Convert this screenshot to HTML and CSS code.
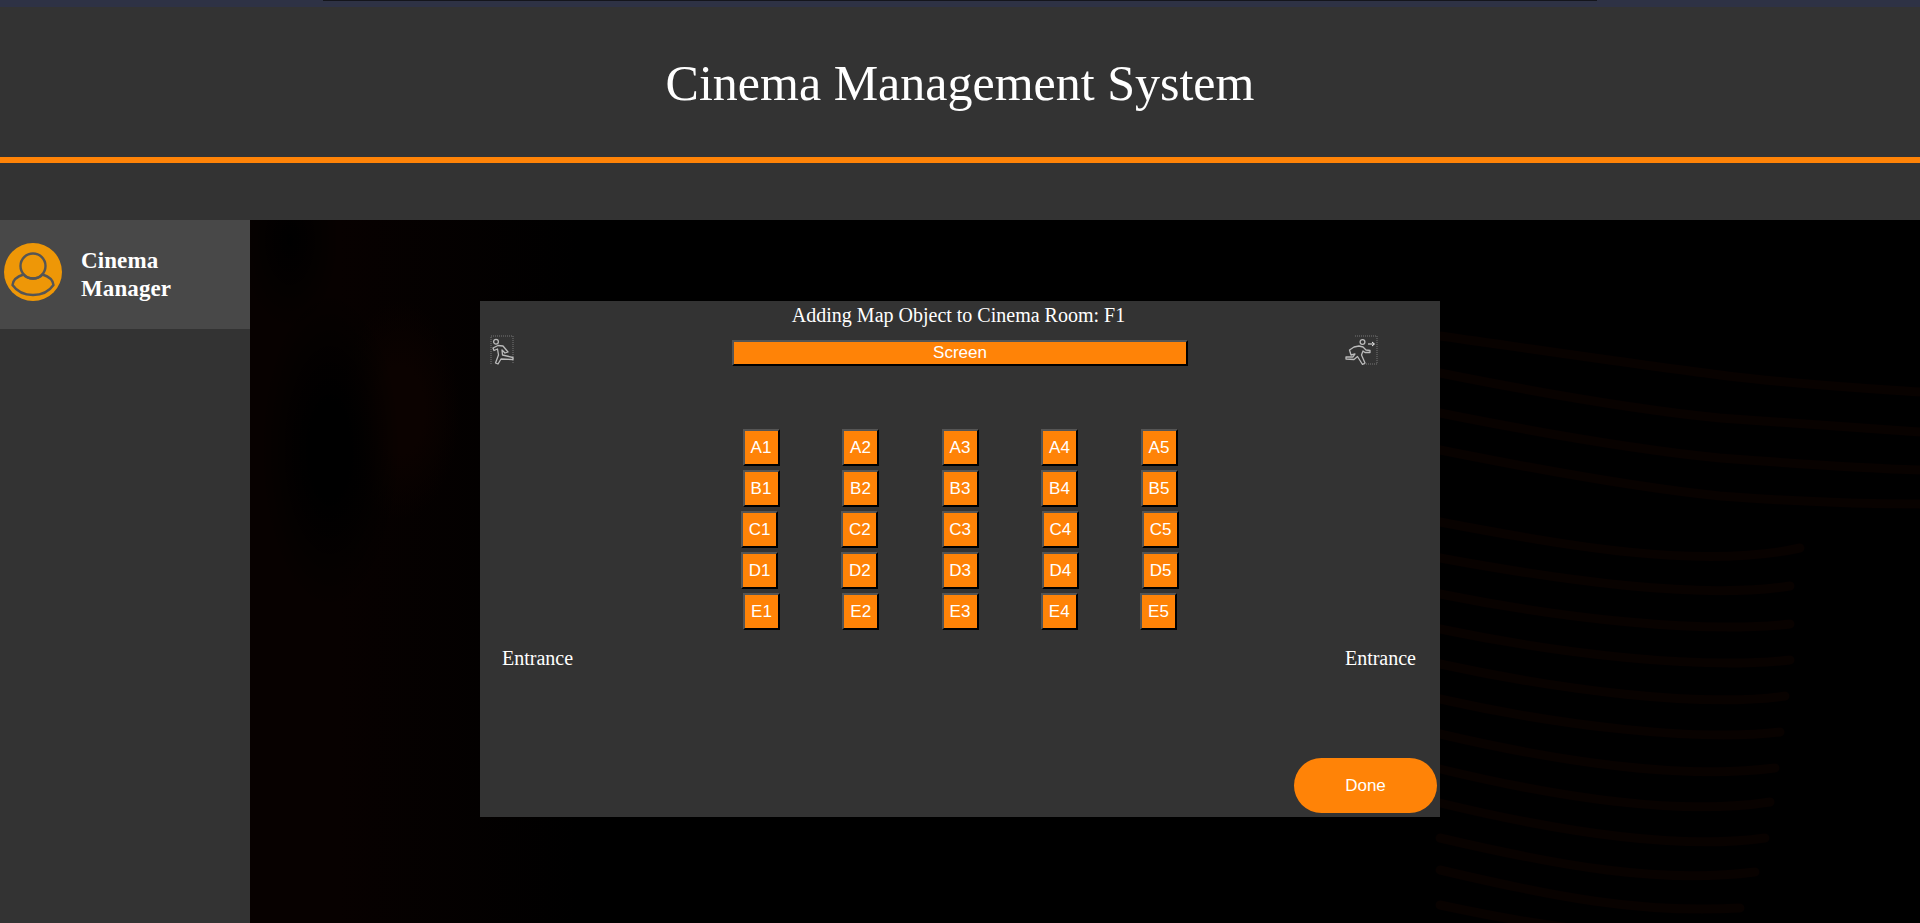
FILE: index.html
```html
<!DOCTYPE html>
<html lang="en">
<head>
    <meta charset="UTF-8">
    <title>Cinema Management System</title>
    <link rel="stylesheet" href="styles.css">
</head>
<body>

<div class="topstrip"><div class="topstrip-line"></div></div>
<header class="header">
    <h1>Cinema Management System</h1>
</header>
<nav class="navbar"></nav>

<div class="content">
    <aside class="sidebar">
        <div class="profile">
            <svg class="avatar" viewBox="0 0 58 58">
                <circle cx="29" cy="29" r="29" fill="#ee9707"/>
                <circle cx="29" cy="23" r="12.5" fill="none" stroke="#555" stroke-width="2.4"/>
                <path d="M19.5 31.5 C13 33.5 9 37 8.5 42 C13 48.5 20.5 52 29 52 C37.5 52 45 48.5 49.5 42 C49 37 45 33.5 38.5 31.5 C36 34.5 32.8 35.5 29 35.5 C25.2 35.5 22 34.5 19.5 31.5 Z" fill="none" stroke="#555" stroke-width="2.4" stroke-linejoin="round"/>
            </svg>
            <div class="profile-name">Cinema<br>Manager</div>
        </div>
    </aside>

    <main class="main">
        <!-- faint backdrop picture -->
        <svg class="backdrop" viewBox="250 220 1670 703" preserveAspectRatio="none">
            <g fill="none" stroke="#080200" stroke-width="9" stroke-linecap="round">
                <path d="M1440 336 C1540 350 1640 365 1720 375 C1800 385 1860 388 1920 392"/>
                <path d="M1440 373 C1540 393 1640 410 1720 418 C1800 424 1860 428 1920 432"/>
                <path d="M1440 413 C1540 433 1640 450 1720 458 C1800 464 1860 468 1920 470"/>
                <path d="M1440 450 C1540 470 1640 488 1720 496 C1800 502 1860 504 1920 504"/>
                <path d="M1440 522 C1560 545 1700 570 1800 548"/>
                <path d="M1440 558 C1560 580 1700 600 1790 586"/>
                <path d="M1440 594 C1560 618 1700 634 1790 624"/>
                <path d="M1440 629 C1560 654 1700 670 1790 660"/>
                <path d="M1440 664 C1560 690 1700 708 1785 696"/>
                <path d="M1440 699 C1560 726 1700 742 1780 732"/>
                <path d="M1440 734 C1560 762 1680 780 1775 768"/>
                <path d="M1440 769 C1560 798 1680 816 1770 802"/>
                <path d="M1440 803 C1560 832 1680 850 1765 838"/>
                <path d="M1440 838 C1560 866 1660 884 1755 872"/>
                <path d="M1440 870 C1550 896 1640 914 1740 908"/>
                <path d="M1440 905 C1500 918 1540 925 1590 930"/>
            </g>
        </svg>

        <div class="map-panel">
            <div class="map-title">Adding Map Object to Cinema Room: F1</div>

            <div class="map-top">
                <svg class="exit-left" viewBox="0 0 24 30">
                    <path d="M1 29 V1 H23 V29" fill="none" stroke="#777" stroke-width="1" stroke-dasharray="1 1"/>
                    <circle cx="6" cy="6.7" r="2.4" fill="none" stroke="#bbb" stroke-width="1.3"/>
                    <path d="M3 13 L8 10.5 L13 11 L18 17 L15 18 L12 15 L12.5 20 L23 22.5 L23 24.5 L11 24 L8 29 L5.5 28 L8.5 20 L7.5 14 L4 15.5 Z" fill="none" stroke="#bbb" stroke-width="1.3" stroke-linejoin="round"/>
                </svg>
                <button class="screen-btn" type="button">Screen</button>
                <svg class="exit-right" viewBox="0 0 33 30">
                    <path d="M10 1 H32 V29 H19" fill="none" stroke="#777" stroke-width="1" stroke-dasharray="1 1"/>
                    <circle cx="17.5" cy="7" r="2.4" fill="none" stroke="#bbb" stroke-width="1.3"/>
                    <path d="M23 9 H29 M27 7 L29.5 9 L27 11" fill="none" stroke="#eee" stroke-width="1"/>
                    <path d="M14 11 L18 12 L21 15 L25 15.5 L25 17.5 L20 17.5 L18 16 L16.5 20 L20 28 L17.5 29.5 L12.5 21.5 L9 24.5 L1 24 L1 22 L8 22 L10 19 L6 20 L4.5 15 L9 12 Z" fill="none" stroke="#bbb" stroke-width="1.3" stroke-linejoin="round"/>
                </svg>
            </div>

            <div class="seats">
                <div class="seat-row gap-mid">
                    <button class="seat" type="button">A1</button>
                    <button class="seat" type="button">A2</button>
                    <button class="seat" type="button">A3</button>
                    <button class="seat" type="button">A4</button>
                    <button class="seat" type="button">A5</button>
                </div>
                <div class="seat-row gap-mid">
                    <button class="seat" type="button">B1</button>
                    <button class="seat" type="button">B2</button>
                    <button class="seat" type="button">B3</button>
                    <button class="seat" type="button">B4</button>
                    <button class="seat" type="button">B5</button>
                </div>
                <div class="seat-row gap-wide">
                    <button class="seat" type="button">C1</button>
                    <button class="seat" type="button">C2</button>
                    <button class="seat" type="button">C3</button>
                    <button class="seat" type="button">C4</button>
                    <button class="seat" type="button">C5</button>
                </div>
                <div class="seat-row gap-wide">
                    <button class="seat" type="button">D1</button>
                    <button class="seat" type="button">D2</button>
                    <button class="seat" type="button">D3</button>
                    <button class="seat" type="button">D4</button>
                    <button class="seat" type="button">D5</button>
                </div>
                <div class="seat-row gap-narrow">
                    <button class="seat" type="button">E1</button>
                    <button class="seat" type="button">E2</button>
                    <button class="seat" type="button">E3</button>
                    <button class="seat" type="button">E4</button>
                    <button class="seat" type="button">E5</button>
                </div>
            </div>

            <div class="entrances">
                <span>Entrance</span>
                <span>Entrance</span>
            </div>

            <button class="done-btn" type="button">Done</button>
        </div>
    </main>
</div>

</body>
</html>
```

FILE: styles.css
```css
html, body {
    height: 100%;
}
body {
    margin: 0;
    display: flex;
    flex-direction: column;
    overflow: hidden;
    background-color: #000;
    color: #fff;
    font-family: "Liberation Serif", serif;
}
.topstrip {
    height: 7px;
    flex: none;
    background-color: #2e3245;
    display: flex;
    justify-content: center;
}
.topstrip-line {
    width: 1274px;
    height: 1px;
    background-color: #14151c;
}
.header {
    height: 150px;
    flex: none;
    box-sizing: content-box;
    background-color: #333;
    border-bottom: 6px solid #ff8307;
    display: flex;
    align-items: center;
    justify-content: center;
}
.header h1 {
    margin: 2px 0 0;
    font-size: 50px;
    font-weight: normal;
}
.navbar {
    height: 57px;
    flex: none;
    background-color: #333;
}
.content {
    flex: 1;
    display: flex;
    min-height: 0;
}
.sidebar {
    width: 250px;
    flex: none;
    background-color: #333;
}
.profile {
    height: 104px;
    background-color: #484848;
    display: flex;
    align-items: center;
    padding: 0 0 5px 4px;
    gap: 19px;
}
.avatar {
    width: 58px;
    height: 58px;
    flex: none;
}
.profile-name {
    margin-top: 5px;
    font-size: 23px;
    font-weight: bold;
    line-height: 28px;
    letter-spacing: 0.1px;
}
.main {
    flex: 1;
    position: relative;
    background-color: #000;
    background-image:
        radial-gradient(ellipse 70px 160px at 80px 230px, #000 30%, transparent 100%),
        radial-gradient(ellipse 50px 90px at 40px 20px, #000 0, transparent 100%),
        radial-gradient(ellipse 60px 110px at 150px 190px, #0b0200 40%, transparent 100%),
        linear-gradient(to right, #070100 0, #070100 90px, transparent 330px);
}
.backdrop {
    position: absolute;
    inset: 0;
    width: 100%;
    height: 100%;
}
.map-panel {
    position: relative;
    width: 960px;
    height: 516px;
    margin: 81px 0 0 230px;
    padding: 4px 3px 4px 0;
    box-sizing: border-box;
    background-color: #333;
    display: flex;
    flex-direction: column;
}
.map-title {
    font-size: 20px;
    line-height: 21px;
    text-align: center;
}
.map-top {
    display: grid;
    grid-template-columns: 1fr auto 1fr;
    align-items: start;
    margin-top: 9px;
}
.exit-left {
    width: 24px;
    height: 30px;
    margin-left: 10px;
}
.exit-right {
    width: 33px;
    height: 30px;
    justify-self: end;
    margin-right: 59px;
}
.screen-btn {
    width: 456px;
    height: 26px;
    margin: 5px 0 0 0;
    padding: 0;
    position: relative;
    left: 1.5px;
    font-family: "Liberation Sans", Arial, sans-serif;
    font-size: 17px;
    color: #fff;
    background-color: #ff8307;
    border: 2px solid;
    border-color: #555 #000 #000 #555;
}
.seats {
    margin-top: 63px;
    display: flex;
    flex-direction: column;
    gap: 4px;
}
.seat-row {
    display: flex;
    justify-content: center;
    position: relative;
    left: 1.5px;
}
.gap-mid {
    gap: 62.5px;
}
.gap-wide {
    gap: 63.25px;
}
.gap-narrow {
    gap: 62.25px;
}
.seat {
    width: 37px;
    height: 37px;
    padding: 0;
    font-family: "Liberation Sans", Arial, sans-serif;
    font-size: 17px;
    color: #fff;
    background-color: #ff8307;
    border: 2px solid;
    border-color: #555 #000 #000 #555;
}
.entrances {
    display: flex;
    justify-content: space-between;
    margin-top: 18px;
    padding: 0 21px 0 22px;
    font-size: 20px;
    line-height: 21px;
}
.done-btn {
    width: 143px;
    height: 55px;
    margin-top: auto;
    align-self: flex-end;
    font-family: "Liberation Sans", Arial, sans-serif;
    font-size: 17px;
    color: #fff;
    background-color: #ff8307;
    border: none;
    border-radius: 28px;
}
```
